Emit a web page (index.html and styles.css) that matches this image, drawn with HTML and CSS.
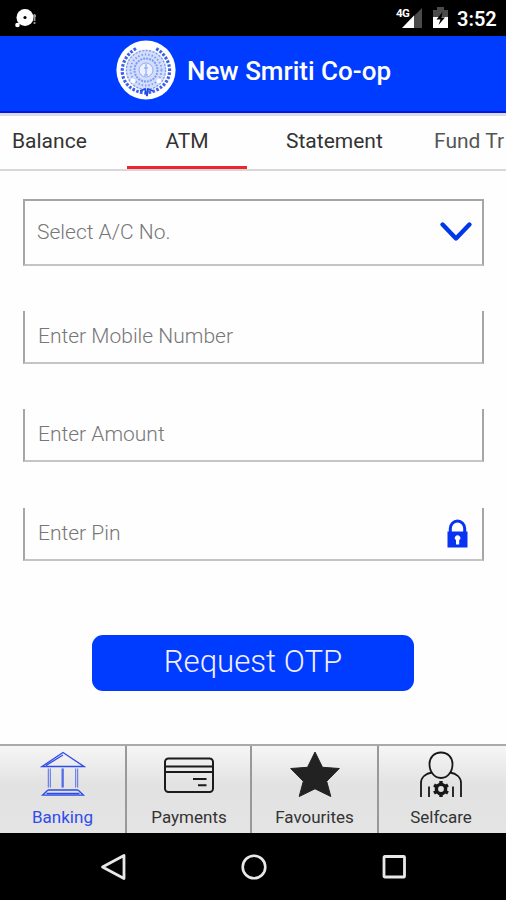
FILE: index.html
```html
<!DOCTYPE html>
<html lang="en">
<head>
<meta charset="utf-8">
<title>New Smriti Co-op</title>
<link rel="stylesheet" href="styles.css">
</head>
<body>
<div class="screen">
  <div class="status">
    <svg class="status-left" width="26" height="24" viewBox="0 0 26 24"><circle cx="11" cy="11.5" r="8.5" fill="#fff"/><circle cx="11" cy="11.5" r="1.6" fill="#000"/><circle cx="3.5" cy="19" r="2.3" fill="#fff"/><path d="M20.500 8v7M19 10h3M20.500 16v2" stroke="#999" stroke-width="1.8"/></svg>
    <span class="network">4G</span>
    <svg class="signal" width="22" height="20" viewBox="0 0 22 20"><path d="M21 0v20H13V8z" fill="#4b4b4b"/><path d="M13 7.5V20H1z" fill="#fff"/></svg>
    <svg class="battery" width="15" height="21" viewBox="0 0 15 21"><path d="M0 3h4V0h7v3h4v7H0z" fill="#4b4b4b"/><path d="M0 10h15v11H0z" fill="#fff"/><path d="M9.500 5 3.5 12.500h4L5.500 18 12 10.500H8.500z" fill="#000"/></svg>
    <span class="clock">3:52</span>
  </div>
  <header class="header">
    <svg class="emblem" width="60" height="60" viewBox="0 0 60 60">
      <circle cx="30" cy="30" r="29.6" fill="#fff"/>
      <path d="M20 8.5C-1 21 2 50 29 53C58 50 61 21 40 8.5" fill="none" stroke="#3e60e8" stroke-width="3.2" stroke-dasharray="2.6 1.5"/>
      <circle cx="30" cy="30" r="20.5" fill="#d3ddfc"/>
      <g fill="none" stroke="#7f9bf3">
        <circle cx="30" cy="30" r="19.5" stroke-width="1.3" stroke-dasharray="2 1.5"/>
        <circle cx="30" cy="30" r="15.5" stroke-width="2" stroke-dasharray="1.4 2"/>
        <circle cx="30" cy="30" r="11.5" stroke-width="2" stroke-dasharray="2 1"/>
        <circle cx="30" cy="30" r="7" fill="#edf1ff" stroke-width=".8"/>
        <path d="M30 24v11M28 35h4M28 28h4"/>
      </g>
      <circle cx="17" cy="41" r="2.4" fill="#fff"/><circle cx="43" cy="41" r="2.4" fill="#fff"/>
      <path d="M24 51l5-2 2 7 1-7 5 2" fill="none" stroke="#2349e5" stroke-width="1.8"/>
    </svg>
    <h1 class="title">New Smriti Co-op</h1>
  </header>
  <nav class="tabs">
    <span class="tab tab-first">Balance</span>
    <span class="tab tab-active">ATM</span>
    <span class="tab tab-statement">Statement</span>
    <span class="tab tab-fund">Fund Tr</span>
  </nav>
  <main class="form">
    <div class="field select"><span class="hint">Select A/C No.</span>
      <svg width="32" height="20" viewBox="0 0 32 20"><path d="M2.6 2.5 16 16.500 29.4 2.5" fill="none" stroke="#0038e8" stroke-width="4.4" stroke-linecap="round" stroke-linejoin="round"/></svg>
    </div>
    <div class="field"><span class="hint">Enter Mobile Number</span></div>
    <div class="field"><span class="hint">Enter Amount</span></div>
    <div class="field pin"><span class="hint">Enter Pin</span>
      <svg width="21" height="29" viewBox="0 0 21 29"><path d="M3.3 14V9.5a7.2 7.5 0 0 1 14.4 0V14" fill="none" stroke="#0634f2" stroke-width="3"/><path d="M.5 12.5h20V28.500H.5z" fill="#0634f2"/><path d="M9 25.500v-4.500L7.800 20a2.900 2.900 0 1 1 5.600 0l-1.200 1v4.500z" fill="#fff"/></svg>
    </div>
    <button class="request" type="button">Request OTP</button>
  </main>
  <nav class="bottom">
    <div class="item item-active">
      <svg width="46" height="46" viewBox="0 0 46 46" fill="none" stroke="#2d4cea" stroke-width="1.3"><path d="M2 15.500 23 1.500l21 14zM6 14.500 23 4M23 17.500v19M8 39h30M8 39l-5.500 5.200h41L38 39M6.500 42.500h33"/><path d="M8.300 17.500v19M10.300 17.500v19M22 17.500v19M35.700 17.500v19M37.700 17.500v19" stroke-width=".8"/></svg>
      <span>Banking</span>
    </div>
    <div class="item item-payments">
      <svg width="52" height="46" viewBox="0 0 52 46" fill="none" stroke="#1b1b1b" stroke-width="2"><rect x="2" y="7.500" width="48" height="33.500" rx="3.500"/><path d="M2 15.500h48M2 21h48M30 28h13.500M35 34.300h8.500"/></svg>
      <span>Payments</span>
    </div>
    <div class="item">
      <svg width="52" height="48" viewBox="0 0 52 48"><path d="m26 2 7.500 15.300 16.800 1.200-12.600 12.800 4.100 15.200L26 38.800l-15.800 7.700 4.100-15.200L1.700 18.500l16.800-1.200z" fill="#222" stroke="#222" stroke-width="1" stroke-linejoin="round"/></svg>
      <span>Favourites</span>
    </div>
    <div class="item">
      <svg width="46" height="48" viewBox="0 0 46 48" fill="none" stroke="#171717" stroke-width="1.800"><path d="M23 2.500c-7 0-11.500 5-11.500 11.500 0 7.500 4.500 14 11.500 14s11.500-6.500 11.500-14C34.500 7.500 30 2.500 23 2.500z"/><path d="M3 47V33c0-6 5-9.500 11-10.500M32 22.500C38 23.500 43 27 43 33v14M11 36.500V47M35 36.500V47"/><circle cx="23" cy="39" r="4.600" stroke-width="3.400"/><path d="M23 31v3M23 44v3M16 35l2.600 1.500M27.400 41.500 30 43M16 43l2.600-1.500M27.400 36.500 30 35" stroke-width="3.400"/></svg>
      <span>Selfcare</span>
    </div>
  </nav>
  <div class="system">
    <svg width="28" height="30" viewBox="0 0 28 30"><path d="M25 3.500v23L3.500 15z" fill="none" stroke="#e8e8e8" stroke-width="2.800" stroke-linejoin="round"/></svg>
    <svg width="28" height="30" viewBox="0 0 28 30"><circle cx="14" cy="15" r="11.300" fill="none" stroke="#e8e8e8" stroke-width="2.600"/></svg>
    <svg width="28" height="30" viewBox="0 0 28 30"><rect x="4" y="4.500" width="20.500" height="20.500" rx=".8" fill="none" stroke="#e8e8e8" stroke-width="2.800"/></svg>
  </div>
</div>
</body>
</html>
```
FILE: styles.css
```css
* { box-sizing: border-box; }
body { margin: 0; background: #fff; font-family: Roboto, "Liberation Sans", sans-serif; }
.screen { width: 506px; height: 900px; overflow: hidden; display: flex; flex-direction: column; background: #fefefe; }
.screen svg { display: block; flex: none; }
.status { height: 36px; background: #000; display: flex; flex: none; color: #fff; }
.status-left { margin: 6px 0 0 14px; }
.network { margin: 7px 0 0 356px; width: 13px; font: 700 11.5px/13px Roboto, sans-serif; letter-spacing: -.7px; }
.signal { margin: 8px 0 0 -8px; }
.battery { margin: 7px 0 0 10px; }
.clock { margin: 8px 0 0 9px; font-size: 20px; line-height: 23px; font-weight: 600; }
.header { height: 77px; flex: none; background: #003cff; border-bottom: 2px solid #0018dc; display: flex; }
.emblem { margin: 4px 0 0 116px; }
.title { margin: 20px 0 0 11px; font-size: 26px; line-height: 30px; font-weight: 500; color: #fff; white-space: nowrap; }
.tabs { height: 58px; flex: none; display: flex; border-top: 3px solid #ded9e2; border-bottom: 2px solid #d8d8d8; color: #333; font-size: 21px; line-height: 25px; white-space: nowrap; }
.tab { flex: none; padding-top: 13px; height: 53px; }
.tab-first { width: 127px; padding-left: 12px; }
.tab-active { width: 120px; text-align: center; border-bottom: 3px solid #ed252e; }
.tab-statement { width: 187px; padding-left: 39px; }
.tab-fund { color: #555; }
.form { flex: none; height: 573px; padding: 28px 22px 0 23px; display: flex; flex-direction: column; }
.field { height: 53px; flex: none; margin-bottom: 45.3px; border: solid #a6a6a6; border-width: 0 2px 2px; border-bottom-color: #c4c4c4; display: flex; align-items: center; justify-content: space-between; padding-left: 13px; }
.select { height: 67px; border-top-width: 2px; padding: 0 10px 1px 12px; margin-bottom: 45px; }
.hint { font-size: 21px; line-height: 25px; font-weight: 300; color: #777; white-space: nowrap; }
.pin { padding-right: 14px; }
.request { flex: none; width: 322px; height: 56px; margin: 29px 0 0 69px; border: 0; border-radius: 11px; background: #003cff; color: #f2efff; font: 300 31.2px/54px Roboto, sans-serif; padding: 0 0 1px; white-space: nowrap; }
.bottom { height: 89px; flex: none; border-top: 2px solid #aaa; display: grid; grid-template-columns: 127px 125px 127px 127px; background: linear-gradient(#f6f6f6, #e2e2e2 45%, #e4e4e4); }
.item { border-right: 2px solid #999; display: flex; flex-direction: column; align-items: center; color: #333; font-size: 17px; line-height: 20px; padding-top: 4px; }
.item:last-child { border-right: 0; padding-right: 3px; }
.item-payments { padding-left: 1px; }
.item svg { height: 48px; }
.item span { margin-top: 9px; }
.item-active { color: #304cec; }
.system { height: 67px; flex: none; background: #000; display: flex; padding: 19px 0 0 99px; gap: 112.5px; }
```
